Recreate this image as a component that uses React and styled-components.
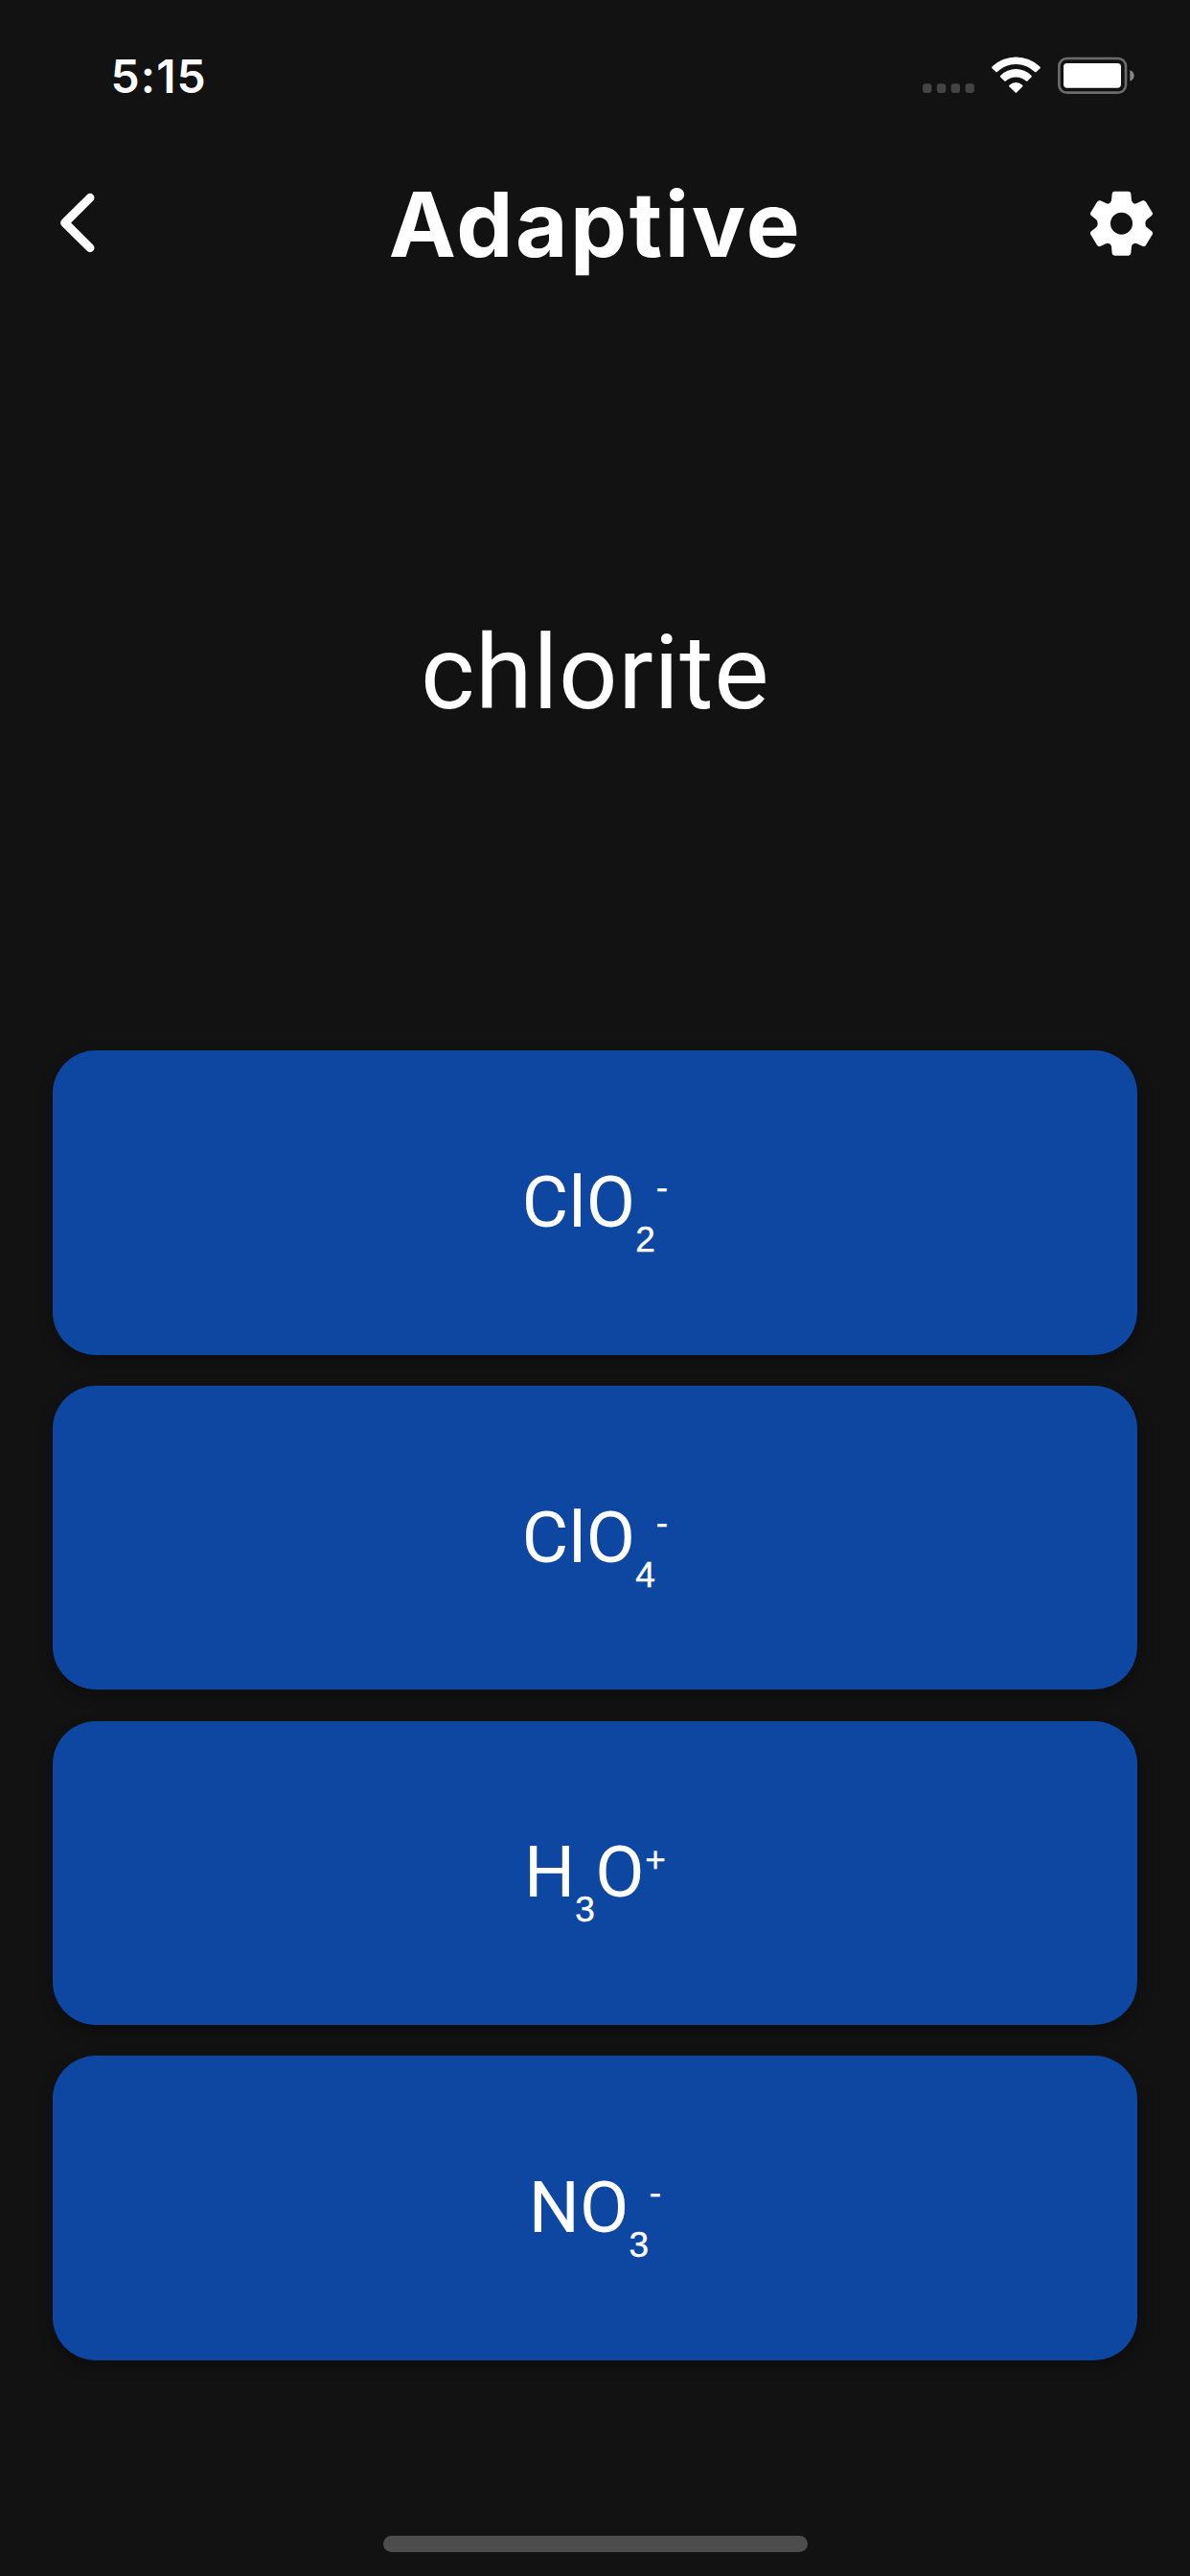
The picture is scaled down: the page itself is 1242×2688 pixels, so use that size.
import React from "react";
import styled, { createGlobalStyle } from "styled-components";

const GlobalStyle = createGlobalStyle`
  * { box-sizing: border-box; }
  body { margin: 0; background: #121212; }
`;

const Screen = styled.main`
  display: flex;
  flex-direction: column;
  width: 1242px;
  height: 2688px;
  overflow: hidden;
  background: #121212;
  color: #fff;
  font-family: Inter, "Liberation Sans", sans-serif;
`;

const StatusBar = styled.div`
  display: flex;
  justify-content: space-between;
  height: 132px;
  padding: 40px 22px 0 115.5px;
`;

const Time = styled.span`
  font-size: 48px;
  font-weight: 600;
  line-height: 80px;
  letter-spacing: 1.1px;
`;

const StatusIcons = styled.svg`
  width: 280px;
  height: 80px;
`;

const Header = styled.header`
  display: flex;
  align-items: center;
  justify-content: space-between;
  height: 206px;
  padding: 0 12px 0 40px;
`;

const IconButton = styled.button`
  display: flex;
  width: ${(p) => p.$width}px;
  height: 110px;
  padding: 0;
  border: 0;
  background: none;
  color: inherit;

  & > svg {
    width: 100%;
    height: 100%;
  }
`;

const Title = styled.h1`
  margin: 0 7px 3px 0;
  font-size: 94px;
  font-weight: 700;
  line-height: 114px;
  letter-spacing: 2.5px;
`;

const Prompt = styled.section`
  display: flex;
  align-items: center;
  justify-content: center;
  height: 758.4px;
  padding-bottom: 30px;
  font-family: Roboto, "Liberation Sans", sans-serif;
  font-size: 108px;
  line-height: 130px;
  letter-spacing: 0.6px;
`;

const Answers = styled.div`
  display: flex;
  flex-direction: column;
  gap: 32.2px;
  padding: 0 55px;
`;

const Answer = styled.button`
  display: flex;
  align-items: center;
  justify-content: center;
  height: 317.4px;
  padding: 0;
  border: 0;
  border-radius: 45px;
  background: #0d47a1;
  color: #fff;
  box-shadow: 0 6px 16px rgba(0, 0, 0, 0.3);
  font-family: Roboto, "Liberation Sans", sans-serif;
  font-size: 74.5px;
  line-height: 88px;
  letter-spacing: 0.2px;
`;

const Formula = styled.span`
  white-space: nowrap;
`;

const Script = styled.span`
  font-family: "Liberation Sans", Arial, sans-serif;
  font-size: 37px;
  line-height: 0;
  -webkit-text-stroke: 0.4px currentColor;
`;

const Subscript = styled(Script)`
  vertical-align: -26px;
`;

const Superscript = styled(Script)`
  margin-left: 0.6px;
  vertical-align: ${(p) => p.$rise ?? 29}px;
`;

const Footer = styled.footer`
  display: flex;
  flex: 1;
  align-items: flex-end;
  justify-content: center;
  padding-bottom: 25px;
`;

const HomeIndicator = styled.div`
  width: 443px;
  height: 17px;
  border-radius: 9px;
  background: #4d4d4d;
`;

const SignalDots = [69, 113.5, 158, 202.5];

function DeviceStatus() {
  return (
    <StatusIcons viewBox="0 0 840 240" aria-hidden="true">
      <g fill="#444">
        {SignalDots.map((x) => (
          <rect key={x} x={x} y="142" width="28" height="29" rx="9" />
        ))}
      </g>
      <g fill="#fff">
        <path d="M286 94Q284 91 287 88A108 108 0 0 1 435 88Q439 91 437 94L425 105Q422 107 419 104A84 84 0 0 0 303 104Q300 107 298 105Z" />
        <path d="M312 121Q310 119 313 116A67 67 0 0 1 409 116Q412 119 410 121L398 133Q395 136 392 133A47 47 0 0 0 330 133Q327 136 324 133Z" />
        <path d="M340 151Q338 149 341 146A29 29 0 0 1 381 146Q384 149 382 151L364 169Q361 172 358 169Z" />
      </g>
      <rect x="496" y="63" width="209" height="107" rx="24" fill="none" stroke="#6c6c6c" strokeWidth="8" />
      <rect x="510" y="78" width="180" height="77" rx="11" fill="#fff" />
      <path d="M718 99Q731 105 731 117T718 134Z" fill="#858585" />
    </StatusIcons>
  );
}

function BackIcon() {
  return (
    <svg viewBox="0 0 300 330" fill="none" stroke="currentColor" strokeWidth="27" strokeLinecap="round" strokeLinejoin="round">
      <path d="M162 79L83 157.500L162 236" />
    </svg>
  );
}

function GearIcon() {
  return (
    <svg viewBox="0 0 360 330" fill="currentColor">
      <path
        fillRule="evenodd"
        d="M160 59H203Q210 59 211 66L213 88Q216 97 224 98Q231 97 235 94L248 88Q254 86 258 92L278 125Q281 130 276 135L261 147Q256 151 256 159.500Q256 168 261 172L276 184Q281 189 278 194L258 227Q254 233 248 231L235 225Q231 222 224 221Q216 222 213 231L211 253Q210 260 203 260H160Q153 260 152 253L150 231Q147 222 139 221Q132 222 128 225L115 231Q109 233 105 227L85 194Q82 189 87 184L102 172Q107 168 107 159.500Q107 151 102 147L87 135Q82 130 85 125L105 92Q109 86 115 88L128 94Q132 97 139 98Q147 97 150 88L152 66Q153 59 160 59ZM181.500 125A34.500 34.500 0 1 0 181.500 194A34.500 34.500 0 1 0 181.500 125Z"
      />
    </svg>
  );
}

export default function App() {
  return (
    <>
      <GlobalStyle />
      <Screen>
        <StatusBar>
          <Time>5:15</Time>
          <DeviceStatus />
        </StatusBar>
        <Header>
          <IconButton $width={100} aria-label="Back">
            <BackIcon />
          </IconButton>
          <Title>Adaptive</Title>
          <IconButton $width={120} aria-label="Settings">
            <GearIcon />
          </IconButton>
        </Header>
        <Prompt>chlorite</Prompt>
        <Answers>
          <Answer>
            <Formula>ClO<Subscript>2</Subscript><Superscript>-</Superscript></Formula>
          </Answer>
          <Answer>
            <Formula>ClO<Subscript>4</Subscript><Superscript>-</Superscript></Formula>
          </Answer>
          <Answer>
            <Formula>H<Subscript>3</Subscript>O<Superscript $rise={26}>+</Superscript></Formula>
          </Answer>
          <Answer>
            <Formula>NO<Subscript>3</Subscript><Superscript>-</Superscript></Formula>
          </Answer>
        </Answers>
        <Footer>
          <HomeIndicator />
        </Footer>
      </Screen>
    </>
  );
}
